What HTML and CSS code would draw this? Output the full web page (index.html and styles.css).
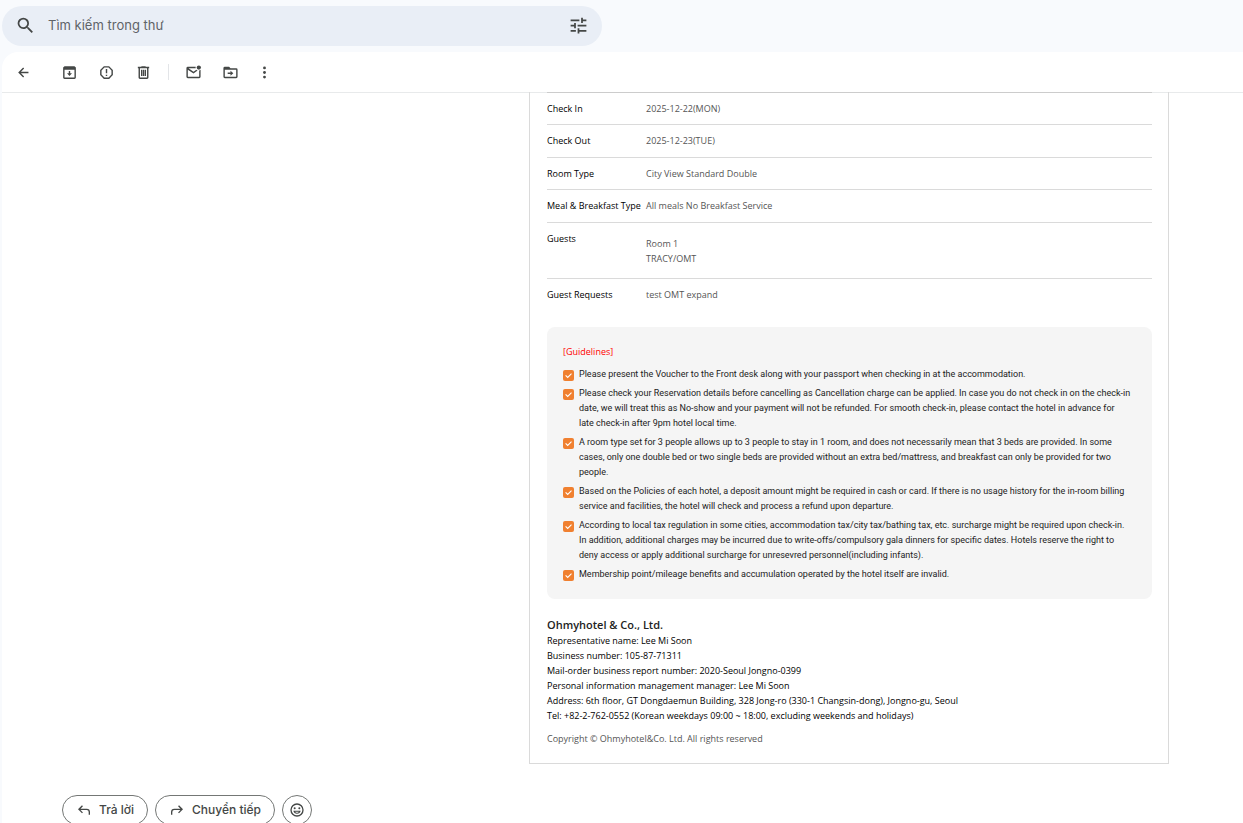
FILE: index.html
```html
<!DOCTYPE html>
<html lang="vi">
<head>
    <meta charset="UTF-8">
    <meta name="viewport" content="width=device-width, initial-scale=1">
    <title>Ohmyhotel voucher</title>
    <link rel="stylesheet" href="styles.css">
</head>
<body>
<svg class="defs" width="0" height="0" aria-hidden="true">
    <symbol id="check" viewBox="0 0 11 11">
        <rect width="11" height="11" rx="2" fill="#f08030"/>
        <path d="M2.6 5.3l2.1 2.2 3.8-3.9" fill="none" stroke="#fff" stroke-width="1.1"/>
    </symbol>
</svg>

<form class="search" role="search">
    <button type="button" class="icon-btn" aria-label="Tìm kiếm">
        <svg class="icon-lg" viewBox="0 0 24 24"><path d="M15.5 14h-.79l-.28-.27A6.47 6.47 0 0 0 16 9.5 6.5 6.5 0 1 0 9.5 16c1.61 0 3.09-.59 4.23-1.57l.27.28v.79l5 4.99L20.49 19l-4.99-5zm-6 0C7.01 14 5 11.99 5 9.5S7.01 5 9.5 5 14 7.01 14 9.5 11.99 14 9.5 14z"/></svg>
    </button>
    <input type="text" placeholder="Tìm kiếm trong thư" aria-label="Tìm kiếm trong thư">
    <button type="button" class="icon-btn" aria-label="Bộ lọc">
        <svg class="icon-lg" viewBox="0 0 24 24"><path d="M3 17v2h6v-2H3zM3 5v2h10V5H3zm10 16v-2h8v-2h-8v-2h-2v6h2zM7 9v2H3v2h4v2h2V9H7zm14 4v-2H11v2h10zm-6-4h2V7h4V5h-4V3h-2v6z"/></svg>
    </button>
</form>

<main class="panel">
    <div class="toolbar">
        <button type="button" class="icon-btn back" aria-label="Quay lại">
            <svg class="icon" viewBox="0 0 24 24"><path d="M19 11H8.4l4.5-4.5L11.5 5l-7 7 7 7 1.4-1.5L8.4 13H19z"/></svg>
        </button>
        <button type="button" class="icon-btn" aria-label="Lưu trữ">
            <svg class="icon" viewBox="0 0 24 24"><path d="M5 3h14l2 2v14a2 2 0 0 1-2 2H5a2 2 0 0 1-2-2V5zm0 5v11h14V8zm6 2h2v3h2.5L12 17l-3.5-4H11z"/></svg>
        </button>
        <button type="button" class="icon-btn" aria-label="Báo cáo thư rác">
            <svg class="icon" viewBox="0 0 24 24"><path d="M8.300 3h7.400L21 8.300v7.400L15.700 21H8.300L3 15.700V8.300zm.8 2L5 9.100v5.800L9.100 19h5.800l4.100-4.100V9.100L14.900 5zM11 7h2v6h-2zm0 8h2v2h-2z"/></svg>
        </button>
        <button type="button" class="icon-btn" aria-label="Xóa">
            <svg class="icon" viewBox="0 0 24 24"><path d="M9 3h6v1h5v2h-1v13a2 2 0 0 1-2 2H7a2 2 0 0 1-2-2V6H4V4h5zM7 6v13h10V6zm1.500 2h2v9h-2zm2.700 0h1.600v9h-1.600zm2.300 0h2v9h-2z"/></svg>
        </button>
        <span class="divider"></span>
        <button type="button" class="icon-btn" aria-label="Đánh dấu là chưa đọc">
            <svg class="icon" viewBox="0 0 24 24"><path d="M4 4h11.100a4 4 0 0 0 0 2H5l7 5 4-2.800a4 4 0 0 0 1.800.9L12 13.300 4 8v10h16V9a4 4 0 0 0 2-1v10a2 2 0 0 1-2 2H4a2 2 0 0 1-2-2V6a2 2 0 0 1 2-2z"/><circle cx="19.500" cy="5" r="3"/></svg>
        </button>
        <button type="button" class="icon-btn" aria-label="Di chuyển đến">
            <svg class="icon" viewBox="0 0 24 24"><path d="M4 4h6l2 2h8a2 2 0 0 1 2 2v10a2 2 0 0 1-2 2H4a2 2 0 0 1-2-2V6a2 2 0 0 1 2-2zm0 4v10h16V8zm4 4h4V9.500l4 3.500-4 3.500V14H8z"/></svg>
        </button>
        <button type="button" class="icon-btn more" aria-label="Thêm">
            <svg class="icon" viewBox="0 0 24 24"><circle cx="12" cy="5.500" r="2"/><circle cx="12" cy="12" r="2"/><circle cx="12" cy="18.500" r="2"/></svg>
        </button>
    </div>

    <div class="mail">
        <article class="voucher" lang="en">
            <table class="info">
                <tr><th scope="row">Check In</th><td>2025-12-22(MON)</td></tr>
                <tr><th scope="row">Check Out</th><td>2025-12-23(TUE)</td></tr>
                <tr><th scope="row">Room Type</th><td>City View Standard Double</td></tr>
                <tr><th scope="row">Meal &amp; Breakfast Type</th><td>All meals No Breakfast Service</td></tr>
                <tr class="guests"><th scope="row">Guests</th><td>Room 1<br>TRACY/OMT</td></tr>
                <tr><th scope="row">Guest Requests</th><td>test OMT expand</td></tr>
            </table>

            <section class="guide">
                <h2>[Guidelines]</h2>
                <ul>
                    <li><svg><use href="#check"/></svg><span>Please present the Voucher to the Front desk along with your passport when checking in at the accommodation.</span></li>
                    <li><svg><use href="#check"/></svg><span>Please check your Reservation details before cancelling as Cancellation charge can be applied. In case you do not check in on the check-in<br>date, we will treat this as No-show and your payment will not be refunded. For smooth check-in, please contact the hotel in advance for<br>late check-in after 9pm hotel local time.</span></li>
                    <li><svg><use href="#check"/></svg><span>A room type set for 3 people allows up to 3 people to stay in 1 room, and does not necessarily mean that 3 beds are provided. In some<br>cases, only one double bed or two single beds are provided without an extra bed/mattress, and breakfast can only be provided for two<br>people.</span></li>
                    <li><svg><use href="#check"/></svg><span>Based on the Policies of each hotel, a deposit amount might be required in cash or card. If there is no usage history for the in-room billing<br>service and facilities, the hotel will check and process a refund upon departure.</span></li>
                    <li><svg><use href="#check"/></svg><span>According to local tax regulation in some cities, accommodation tax/city tax/bathing tax, etc. surcharge might be required upon check-in.<br>In addition, additional charges may be incurred due to write-offs/compulsory gala dinners for specific dates. Hotels reserve the right to<br>deny access or apply additional surcharge for unresevred personnel(including infants).</span></li>
                    <li><svg><use href="#check"/></svg><span>Membership point/mileage benefits and accumulation operated by the hotel itself are invalid.</span></li>
                </ul>
            </section>

            <footer class="company">
                <h3>Ohmyhotel &amp; Co., Ltd.</h3>
                <p>Representative name: Lee Mi Soon</p>
                <p>Business number: 105-87-71311</p>
                <p>Mail-order business report number: 2020-Seoul Jongno-0399</p>
                <p>Personal information management manager: Lee Mi Soon</p>
                <p>Address: 6th floor, GT Dongdaemun Building, 328 Jong-ro (330-1 Changsin-dong), Jongno-gu, Seoul</p>
                <p>Tel: +82-2-762-0552 (Korean weekdays 09:00 ~ 18:00, excluding weekends and holidays)</p>
                <p class="copy">Copyright © Ohmyhotel&amp;Co. Ltd. All rights reserved</p>
            </footer>
        </article>

        <div class="actions">
            <button type="button">
                <svg viewBox="0 0 24 24"><path d="M9 5L3 11l6 6 1.400-1.400L6.800 12H16a3 3 0 0 1 3 3v4h2v-4a5 5 0 0 0-5-5H6.800l3.600-3.600z"/></svg>
                Trả lời
            </button>
            <button type="button">
                <svg viewBox="0 0 24 24"><path d="M15 5l6 6-6 6-1.400-1.400 3.600-3.600H8a3 3 0 0 0-3 3v4H3v-4a5 5 0 0 1 5-5h9.200l-3.600-3.600z"/></svg>
                Chuyển tiếp
            </button>
            <button type="button" class="emoji" aria-label="Thêm biểu tượng cảm xúc">
                <svg viewBox="0 0 24 24"><path d="M12 2a10 10 0 1 0 0 20 10 10 0 0 0 0-20zm0 2a8 8 0 1 1 0 16 8 8 0 0 1 0-16z"/><circle cx="8.500" cy="9.500" r="1.500"/><circle cx="15.500" cy="9.500" r="1.500"/><path d="M6.500 13h11a5.600 5.600 0 0 1-11 0zm2.500 1.500a3.500 3.500 0 0 0 6 0z"/></svg>
            </button>
        </div>
    </div>
</main>
</body>
</html>
```
FILE: styles.css
```css
*{
    box-sizing: border-box;
    margin: 0;
    padding: 0;
}
body{
    height: 100vh;
    display: flex;
    flex-direction: column;
    overflow: hidden;
    background: #f8fafd;
    padding: 6px 0 0 2px;
    font-family: Inter, Roboto, sans-serif;
}
.defs{
    position: absolute;
}
button{
    font: inherit;
    border: 0;
    background: none;
    cursor: pointer;
}
svg{
    display: block;
    fill: #444746;
}

/* search */
.search{
    display: flex;
    flex: none;
    align-items: center;
    gap: 12px;
    width: 100%;
    max-width: 600px;
    height: 40px;
    padding: 0 13px 2px;
    border-radius: 20px;
    background: #e9eef6;
}
.search input{
    flex: 1;
    min-width: 0;
    border: 0;
    outline: 0;
    background: none;
    font: 13px/20px Inter, Roboto, sans-serif;
    color: #444746;
}
.search input::placeholder{
    color: #5f6368;
    opacity: 1;
}
.icon-lg{
    width: 21px;
    height: 21px;
}

/* panel */
.panel{
    flex: 1;
    min-height: 0;
    display: flex;
    flex-direction: column;
    margin-top: 6px;
    border-radius: 16px 0 0 0;
    background: #fff;
    overflow: hidden;
}
.toolbar{
    display: flex;
    flex: none;
    align-items: center;
    gap: 20px;
    height: 40px;
    padding-left: 13px;
}
.icon{
    width: 17px;
    height: 17px;
}
.back{
    margin-right: 9px;
}
.divider{
    width: 1px;
    height: 16px;
    margin: 0 -4px;
    background: #e3e5e8;
}
.more{
    margin-left: -3px;
}
.mail{
    flex: 1;
    min-height: 0;
    overflow: hidden;
    padding: 0 74px 0 60px;
    box-shadow: inset 0 1px 0 #e8eaeb;
}

/* voucher */
.voucher{
    max-width: 640px;
    margin-left: auto;
    padding: 0 16px 17px 17px;
    border: 1px solid #dadada;
    border-top: 0;
    font: 9px/15px "Open Sans", "Noto Sans", sans-serif;
    color: #000;
}
.info{
    width: 100%;
    border-collapse: separate;
    border-spacing: 0;
    border-top: 1px solid #ccc;
}
.info th,
.info td{
    padding: 8px 0;
    border-bottom: 1px solid #dadada;
    text-align: left;
    vertical-align: top;
    font-weight: 400;
}
.info tr:nth-child(even) > *{
    padding-bottom: 9px;
}
.info th{
    width: 99px;
    white-space: nowrap;
}
.info td{
    color: #555;
}
.info .guests td{
    padding: 13px 0 12px;
}
.info tr:last-child > *{
    border-bottom: 0;
}
.guide{
    margin-top: 16px;
    padding: 17px 16px;
    border-radius: 8px;
    background: #f5f5f5;
    color: #222;
}
.guide h2{
    margin-bottom: 8px;
    font-size: 9px;
    font-weight: 400;
    color: #f00;
}
.guide ul{
    display: grid;
    gap: 4px;
    list-style: none;
    font-family: Roboto, "Liberation Sans", sans-serif;
}
.guide li{
    display: flex;
    gap: 5px;
}
.guide li svg{
    flex: none;
    width: 11px;
    height: 11px;
    margin-top: 3px;
}
.company h3{
    margin-top: 17px;
    font-size: 11px;
    font-weight: 600;
    line-height: 17px;
    color: #222;
}
.company .copy{
    margin-top: 8px;
    color: #555;
}

/* reply buttons */
.actions{
    display: flex;
    gap: 7px;
    margin-top: 31px;
}
.actions button{
    display: flex;
    flex: none;
    align-items: center;
    gap: 7px;
    height: 30px;
    padding: 0 13px;
    border: 1px solid #747775;
    border-radius: 15px;
    font-size: 12px;
    font-weight: 500;
    line-height: 16px;
    color: #444746;
}
.actions svg{
    width: 16px;
    height: 16px;
}
.actions .emoji{
    width: 30px;
    padding: 0;
    justify-content: center;
}
```
